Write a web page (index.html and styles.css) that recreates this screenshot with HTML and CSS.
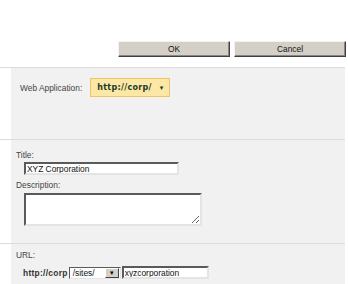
FILE: index.html
```
<!DOCTYPE html>
<html lang="en">
<head>
  <meta charset="UTF-8">
  <title>Create Site Collection</title>
  <link rel="stylesheet" href="styles.css">
</head>
<body>

<div class="toolbar">
  <button class="btn" type="button">OK</button>
  <button class="btn" type="button">Cancel</button>
</div>

<div class="section">
  <div class="panel panel-app">
    <span class="label">Web Application:</span>
    <span class="app-picker">http://corp/ <span class="caret">&#9662;</span></span>
  </div>
</div>

<div class="section">
  <div class="panel panel-title">
    <div class="label">Title:</div>
    <input class="field title-input" type="text" value="XYZ Corporation">
    <div class="label">Description:</div>
    <textarea class="field desc"></textarea>
  </div>
</div>

<div class="section">
  <div class="panel panel-url">
    <div class="label">URL:</div>
    <div class="url-row">
      <span class="url-prefix">http://corp</span>
      <span class="path-select"><span class="path-value">/sites/</span><span class="path-btn">&#9662;</span></span>
      <input class="field url-input" type="text" value="xyzcorporation">
    </div>
  </div>
</div>

</body>
</html>
```
FILE: styles.css
```
body {
  margin: 0;
  background: #fff;
  font-family: "Liberation Sans", Arial, sans-serif;
  font-size: 8.4px;
  color: #444;
}
.toolbar {
  display: flex;
  justify-content: flex-end;
  gap: 4px;
  padding: 41px 2px 0 0;
  height: 26px;
}
.btn {
  width: 112px;
  height: 16px;
  padding: 0;
  background: #d4d0c8;
  border: 1px solid;
  border-color: #f4f2ee #404040 #404040 #f4f2ee;
  box-shadow: inset -1px -1px #8a8780;
  font-family: "Liberation Sans", Arial, sans-serif;
  font-size: 8.4px;
  color: #111;
}
.section {
  border-top: 1px solid #dcdcdc;
  margin-right: 3px;
  padding-left: 11px;
}
.panel {
  background: #f1f1f1;
}
.panel-app {
  height: 71px;
  display: flex;
  align-items: flex-start;
  padding: 10px 0 0 9px;
  box-sizing: border-box;
}
.panel-app .label {
  margin-top: 5px;
  margin-right: 8px;
}
.app-picker {
  display: inline-flex;
  align-items: center;
  width: 80px;
  height: 19px;
  box-sizing: border-box;
  padding-left: 6px;
  background: #fce8a4;
  border: 1px solid #ecc46a;
  font-family: "DejaVu Sans", Verdana, sans-serif;
  font-weight: bold;
  font-size: 8px;
  letter-spacing: 0.3px;
  color: #1e3a2c;
}
.caret {
  margin-left: 8px;
  font-size: 7px;
}
.panel-title {
  height: 103px;
  padding: 10px 0 0 5px;
  box-sizing: border-box;
}
.field {
  display: block;
  box-sizing: border-box;
  background: #fff;
  border: 2px solid;
  border-color: #5a5a5a #e4e4e4 #e4e4e4 #5a5a5a;
  font-family: "Liberation Sans", Arial, sans-serif;
  font-size: 8.4px;
  color: #111;
  padding: 0 1px;
  outline: none;
}
.title-input {
  width: 155px;
  height: 13px;
  margin: 2px 0 5px 8px;
}
.desc {
  width: 178px;
  height: 33px;
  margin: 3px 0 0 8px;
  resize: both;
}
.panel-url {
  height: 41px;
  padding: 6px 0 0 5px;
  box-sizing: border-box;
}
.url-row {
  display: flex;
  align-items: center;
  margin: 6px 0 0 7px;
}
.url-prefix {
  font-weight: bold;
  color: #333;
  letter-spacing: 0.3px;
}
.path-select {
  display: inline-flex;
  align-items: center;
  width: 52px;
  height: 12px;
  box-sizing: border-box;
  margin-left: 1px;
  background: #fff;
  border: 1px solid;
  border-color: #5a5a5a #e4e4e4 #e4e4e4 #5a5a5a;
  color: #111;
}
.path-value {
  flex: 1;
  padding-left: 3px;
}
.path-btn {
  width: 14px;
  height: 10px;
  background: #d4d0c8;
  border: 1px solid;
  border-color: #fff #404040 #404040 #fff;
  box-sizing: border-box;
  font-size: 7px;
  line-height: 8px;
  text-align: center;
  color: #000;
  margin-right: 1px;
}
.url-input {
  display: inline-block;
  width: 87px;
  height: 13px;
  margin-left: 1px;
}
```
